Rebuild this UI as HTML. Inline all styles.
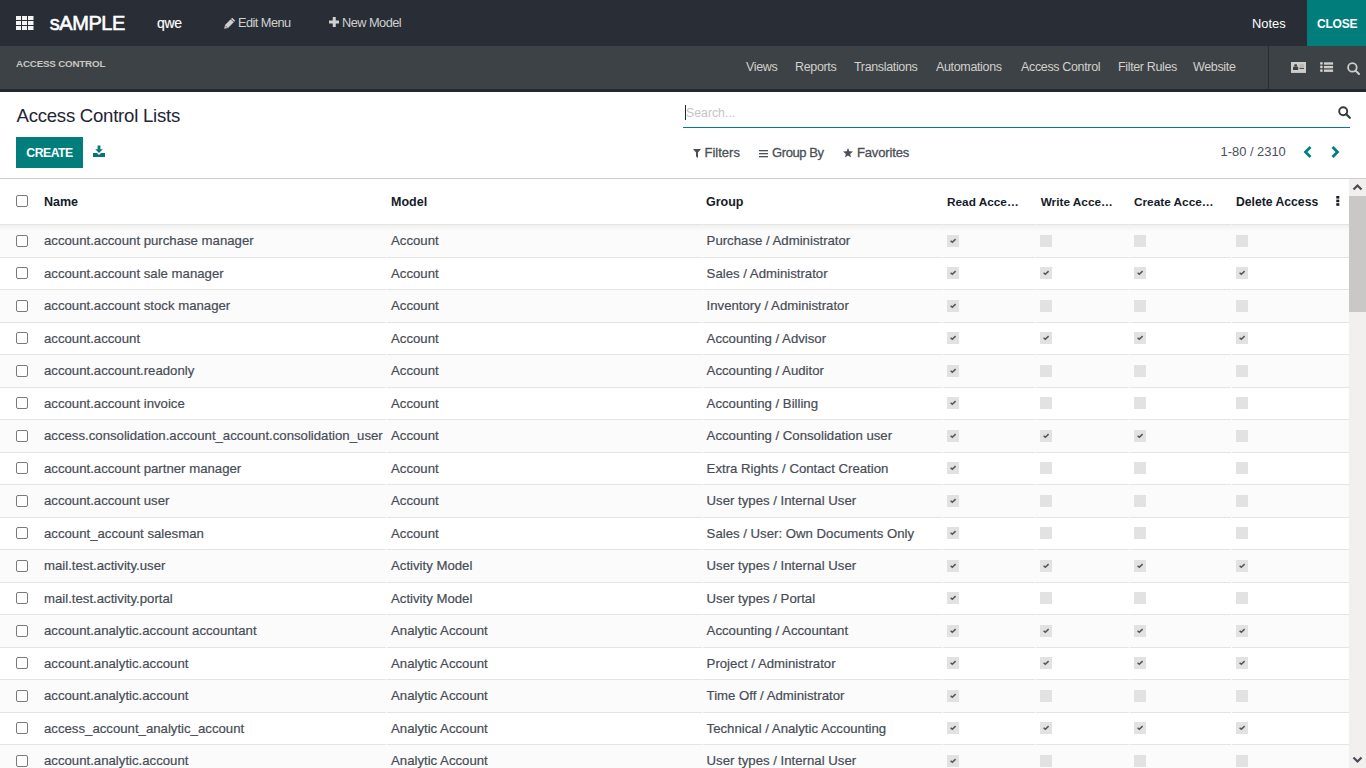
<!DOCTYPE html>
<html><head><meta charset="utf-8">
<style>
*{box-sizing:border-box;margin:0;padding:0}
html,body{width:1366px;height:768px;overflow:hidden;background:#fff;font-family:"Liberation Sans",sans-serif;position:relative}
.abs{position:absolute;white-space:nowrap}
#top{position:absolute;left:0;top:0;width:1366px;height:46px;background:#292d35}
#sub{position:absolute;left:0;top:46px;width:1366px;height:43px;background:#3c4245;border-bottom:0}
#subb{position:absolute;left:0;top:89px;width:1366px;height:3px;background:#24282e}
.t{position:absolute;white-space:nowrap;line-height:1}
.navi{color:#d2d0cc;font-size:12.5px;letter-spacing:-0.35px}
.tl{color:#fff}
#close{position:absolute;left:1307px;top:0;width:59px;height:46px;background:#017e7c}
#cp{position:absolute;left:0;top:92px;width:1366px;height:86px;background:#fff}
#cpb{position:absolute;left:0;top:178px;width:1366px;height:1px;background:#cfcdca}
#create{position:absolute;left:16px;top:137px;width:67px;height:31px;background:#017e7c}
#search{position:absolute;left:683px;top:127px;width:667px;height:1px;background:#017e84}
.fb{color:#4b4f58;font-size:13px;-webkit-text-stroke:0.3px #4b4f58}
.row{position:absolute;left:0;width:1349px}
.row .ln{position:absolute;left:0;top:0;height:1px;background:#e4e4e4}
.cb{position:absolute;left:16px;width:12px;height:12px;border:1.5px solid #7a7a7a;border-radius:2px;background:#fff}
.ck{position:absolute;width:12px;height:12px;background:#e2e2e2}
.ck svg{position:absolute;left:0;top:0}
.cell{position:absolute;color:#474c56;font-size:13.2px;line-height:1;white-space:nowrap;-webkit-text-stroke:0.2px #474c56}
.th{position:absolute;color:#151b29;font-size:12.5px;font-weight:bold;line-height:1;white-space:nowrap}
#sb{position:absolute;left:1349px;top:179px;width:17px;height:589px;background:#f1f0ef}
#thumb{position:absolute;left:1349px;top:196px;width:17px;height:116px;background:#cac8c6}
</style></head><body>
<div id="top"></div>
<div id="sub"></div>
<div id="subb"></div>

<!-- apps icon -->
<svg class="abs" style="left:16px;top:16px" width="18" height="14" viewBox="0 0 18 14">
<g fill="#f4f4f4">
<rect x="0" y="0" width="5" height="4"/><rect x="6" y="0" width="5" height="4"/><rect x="12" y="0" width="5.5" height="4"/>
<rect x="0" y="5" width="5" height="4"/><rect x="6" y="5" width="5" height="4"/><rect x="12" y="5" width="5.5" height="4"/>
<rect x="0" y="10" width="5" height="4"/><rect x="6" y="10" width="5" height="4"/><rect x="12" y="10" width="5.5" height="4"/>
</g></svg>
<div class="t tl" style="left:49.8px;top:13.3px;font-size:20px;letter-spacing:-0.45px;-webkit-text-stroke:0.6px #fff">sAMPLE</div>
<div class="t tl" style="left:157px;top:16px;font-size:14px;letter-spacing:-0.35px;-webkit-text-stroke:0.15px #fff">qwe</div>
<!-- pencil -->
<svg class="abs" style="left:224px;top:16.5px" width="12" height="12" viewBox="0 0 12 12"><path d="M0.2 11.8 L1 8 L8.2 0.8 L11.2 3.8 L4 11 Z" fill="#cfcfcf"/><path d="M6.9 2.1 L9.9 5.1" stroke="#292d35" stroke-width="0.8"/><path d="M1.2 8.6 L3.4 10.8" stroke="#292d35" stroke-width="0.6"/></svg>
<div class="t" style="left:238px;top:17px;font-size:12.8px;letter-spacing:-0.55px;color:#d0d0d0">Edit Menu</div>
<svg class="abs" style="left:328.5px;top:17px" width="10.5" height="10" viewBox="0 0 10.5 10"><path d="M3.75 0h3v3.5H10.5v3H6.75V10h-3V6.5H0v-3h3.75z" fill="#d0d0d0"/></svg>
<div class="t" style="left:342px;top:17px;font-size:12.8px;letter-spacing:-0.55px;color:#d0d0d0">New Model</div>
<div class="t tl" style="left:1252px;top:18px;font-size:12.9px">Notes</div>
<div id="close"></div>
<div class="t tl" style="left:1317px;top:18px;font-size:12px;letter-spacing:-0.2px;font-weight:bold">CLOSE</div>

<!-- sub nav -->
<div class="t" style="left:16px;top:58.7px;font-size:9.8px;font-weight:bold;letter-spacing:-0.2px;color:#c9c7c3">ACCESS CONTROL</div>
<div class="t navi" style="left:746px;top:61px">Views</div>
<div class="t navi" style="left:795px;top:61px">Reports</div>
<div class="t navi" style="left:854px;top:61px">Translations</div>
<div class="t navi" style="left:936px;top:61px">Automations</div>
<div class="t navi" style="left:1021px;top:61px">Access Control</div>
<div class="t navi" style="left:1118px;top:61px">Filter Rules</div>
<div class="t navi" style="left:1193px;top:61px">Website</div>
<div class="abs" style="left:1268px;top:46px;width:1px;height:43px;background:#2a2e33"></div>
<!-- id card -->
<svg class="abs" style="left:1291px;top:62px" width="15" height="11" viewBox="0 0 15 11"><rect x="0" y="0" width="15" height="11" fill="#cfcdc9"/><rect x="3.2" y="2.2" width="2.9" height="2.2" rx="0.8" fill="#3c4245"/><path d="M2 7.9 V5.6 Q2 4.6 3 4.6 H6.3 Q7.2 4.6 7.2 5.6 V7.9Z" fill="#3c4245"/><rect x="8.5" y="2.2" width="4.5" height="4.5" fill="#b9b7b3"/><rect x="8.5" y="6.1" width="4.5" height="0.9" fill="#3c4245"/><rect x="0" y="9.9" width="15" height="1.1" fill="#c4c2be"/></svg>
<!-- list -->
<svg class="abs" style="left:1320px;top:62px" width="14" height="11" viewBox="0 0 14 11"><g fill="#cfcdc9"><circle cx="1.4" cy="1.4" r="1.4"/><circle cx="1.4" cy="5" r="1.4"/><circle cx="1.4" cy="8.7" r="1.4"/><rect x="3.9" y="0.3" width="9.2" height="2.4"/><rect x="3.9" y="3.9" width="9.2" height="2.4"/><rect x="3.9" y="7.5" width="9.2" height="2.4"/></g></svg>
<!-- search -->
<svg class="abs" style="left:1346.5px;top:61.5px" width="13" height="13" viewBox="0 0 13 13"><circle cx="5.4" cy="5.4" r="4.3" fill="none" stroke="#cfcdc9" stroke-width="1.8"/><path d="M8.6 8.6 L12 12" stroke="#cfcdc9" stroke-width="2" stroke-linecap="round"/></svg>

<!-- control panel -->
<div class="t" style="left:16.5px;top:106.5px;font-size:18.6px;letter-spacing:-0.25px;color:#1e2534">Access Control Lists</div>
<div id="create"></div>
<div class="t" style="left:26.3px;top:147.2px;font-size:12.2px;letter-spacing:-0.45px;font-weight:bold;color:#fff">CREATE</div>
<!-- download icon -->
<svg class="abs" style="left:93px;top:145px" width="12" height="12" viewBox="0 0 12 12"><g fill="#07747a"><rect x="4.6" y="0.5" width="2.8" height="4.2"/><path d="M2.2 4.2 H9.8 L6 8 Z"/><path d="M0 8 H4 L6 10 L8 8 H12 V12 H0 Z"/></g></svg>

<div class="abs" style="left:685px;top:105px;width:1px;height:15px;background:#1e2534"></div>
<div class="t" style="left:686px;top:106.5px;font-size:12.3px;color:#c4c4c4">Search...</div>
<div id="search"></div>
<svg class="abs" style="left:1338px;top:106px" width="13" height="13" viewBox="0 0 13 13"><circle cx="5.2" cy="5.2" r="4" fill="none" stroke="#34383f" stroke-width="1.9"/><path d="M8 8 L11.8 11.8" stroke="#34383f" stroke-width="2.2" stroke-linecap="round"/></svg>

<svg class="abs" style="left:693px;top:149px" width="8" height="9" viewBox="0 0 8 9"><path d="M0 0 H8 L5 3.6 V9 L3 7.6 V3.6 Z" fill="#4b4f58"/></svg>
<div class="t fb" style="left:704.5px;top:146px">Filters</div>
<svg class="abs" style="left:759px;top:149px" width="9" height="9" viewBox="0 0 9 9"><g fill="#4b4f58"><rect x="0" y="1" width="9" height="1.3"/><rect x="0" y="4" width="9" height="1.3"/><rect x="0" y="7" width="9" height="1.3"/></g></svg>
<div class="t fb" style="left:772px;top:146px;letter-spacing:-0.4px">Group By</div>
<svg class="abs" style="left:843px;top:148px" width="10" height="10" viewBox="0 0 10 10"><path d="M5 0 L6.3 3.3 L10 3.6 L7.1 5.9 L8.1 9.5 L5 7.5 L1.9 9.5 L2.9 5.9 L0 3.6 L3.7 3.3 Z" fill="#4b4f58"/></svg>
<div class="t fb" style="left:857px;top:146px;letter-spacing:-0.15px">Favorites</div>

<div class="t" style="left:1220.5px;top:146px;font-size:12.9px;color:#4b4f58">1-80 / 2310</div>
<svg class="abs" style="left:1303px;top:146px" width="9" height="12" viewBox="0 0 9 12"><path d="M7.5 1 L2.5 6 L7.5 11" fill="none" stroke="#017e84" stroke-width="2.8"/></svg>
<svg class="abs" style="left:1331px;top:146px" width="9" height="12" viewBox="0 0 9 12"><path d="M1.5 1 L6.5 6 L1.5 11" fill="none" stroke="#017e84" stroke-width="2.8"/></svg>
<div id="cpb"></div>

<!-- table header -->
<div class="cb" style="top:195px"></div>
<div class="th" style="left:44px;top:196px">Name</div>
<div class="th" style="left:391px;top:196px">Model</div>
<div class="th" style="left:706px;top:196px">Group</div>
<div class="th" style="left:947px;top:196.8px;font-size:11.8px">Read Acce…</div>
<div class="th" style="left:1040.7px;top:196.8px;font-size:11.8px">Write Acce…</div>
<div class="th" style="left:1134px;top:196.8px;font-size:11.8px">Create Acce…</div>
<div class="th" style="left:1236px;top:196.3px;font-size:12.2px">Delete Access</div>
<svg class="abs" style="left:1336px;top:196px" width="4" height="10" viewBox="0 0 4 10"><g fill="#151b29"><rect x="0.3" y="0" width="3" height="2.6"/><rect x="0.3" y="3.6" width="3" height="2.6"/><rect x="0.3" y="7.2" width="3" height="2.6"/></g></svg>

<div id="rows">
<div class="row" style="top:224px;height:33px;background:linear-gradient(#f0efee,#fbfbfb 7px)"><div class="ln" style="left:0px;width:386px"></div><div class="ln" style="left:387px;width:315px"></div><div class="ln" style="left:703px;width:239px"></div><div class="ln" style="left:943px;width:92px"></div><div class="ln" style="left:1036px;width:93px"></div><div class="ln" style="left:1130px;width:101px"></div><div class="ln" style="left:1232px;width:117px"></div></div><div class="cb" style="top:235px"></div><div class="cell" style="left:44px;top:234px">account.account purchase manager</div><div class="cell" style="left:391px;top:234px">Account</div><div class="cell" style="left:706.6px;top:234px">Purchase / Administrator</div><div class="ck" style="left:947px;top:235px"><svg width="12" height="12" viewBox="0 0 12 12"><path d="M3.6 5.7 L5.3 7.3 L8.6 4.1" fill="none" stroke="#555" stroke-width="1.5"/></svg></div><div class="ck" style="left:1040px;top:235px"></div><div class="ck" style="left:1134px;top:235px"></div><div class="ck" style="left:1236px;top:235px"></div>
<div class="row" style="top:257px;height:32px;background:#fff"><div class="ln" style="left:0px;width:386px"></div><div class="ln" style="left:387px;width:315px"></div><div class="ln" style="left:703px;width:239px"></div><div class="ln" style="left:943px;width:92px"></div><div class="ln" style="left:1036px;width:93px"></div><div class="ln" style="left:1130px;width:101px"></div><div class="ln" style="left:1232px;width:117px"></div></div><div class="cb" style="top:267px"></div><div class="cell" style="left:44px;top:267px">account.account sale manager</div><div class="cell" style="left:391px;top:267px">Account</div><div class="cell" style="left:706.6px;top:267px">Sales / Administrator</div><div class="ck" style="left:947px;top:267px"><svg width="12" height="12" viewBox="0 0 12 12"><path d="M3.6 5.7 L5.3 7.3 L8.6 4.1" fill="none" stroke="#555" stroke-width="1.5"/></svg></div><div class="ck" style="left:1040px;top:267px"><svg width="12" height="12" viewBox="0 0 12 12"><path d="M3.6 5.7 L5.3 7.3 L8.6 4.1" fill="none" stroke="#555" stroke-width="1.5"/></svg></div><div class="ck" style="left:1134px;top:267px"><svg width="12" height="12" viewBox="0 0 12 12"><path d="M3.6 5.7 L5.3 7.3 L8.6 4.1" fill="none" stroke="#555" stroke-width="1.5"/></svg></div><div class="ck" style="left:1236px;top:267px"><svg width="12" height="12" viewBox="0 0 12 12"><path d="M3.6 5.7 L5.3 7.3 L8.6 4.1" fill="none" stroke="#555" stroke-width="1.5"/></svg></div>
<div class="row" style="top:289px;height:33px;background:#fbfbfb"><div class="ln" style="left:0px;width:386px"></div><div class="ln" style="left:387px;width:315px"></div><div class="ln" style="left:703px;width:239px"></div><div class="ln" style="left:943px;width:92px"></div><div class="ln" style="left:1036px;width:93px"></div><div class="ln" style="left:1130px;width:101px"></div><div class="ln" style="left:1232px;width:117px"></div></div><div class="cb" style="top:300px"></div><div class="cell" style="left:44px;top:299px">account.account stock manager</div><div class="cell" style="left:391px;top:299px">Account</div><div class="cell" style="left:706.6px;top:299px">Inventory / Administrator</div><div class="ck" style="left:947px;top:300px"><svg width="12" height="12" viewBox="0 0 12 12"><path d="M3.6 5.7 L5.3 7.3 L8.6 4.1" fill="none" stroke="#555" stroke-width="1.5"/></svg></div><div class="ck" style="left:1040px;top:300px"></div><div class="ck" style="left:1134px;top:300px"></div><div class="ck" style="left:1236px;top:300px"></div>
<div class="row" style="top:322px;height:32px;background:#fff"><div class="ln" style="left:0px;width:386px"></div><div class="ln" style="left:387px;width:315px"></div><div class="ln" style="left:703px;width:239px"></div><div class="ln" style="left:943px;width:92px"></div><div class="ln" style="left:1036px;width:93px"></div><div class="ln" style="left:1130px;width:101px"></div><div class="ln" style="left:1232px;width:117px"></div></div><div class="cb" style="top:332px"></div><div class="cell" style="left:44px;top:332px">account.account</div><div class="cell" style="left:391px;top:332px">Account</div><div class="cell" style="left:706.6px;top:332px">Accounting / Advisor</div><div class="ck" style="left:947px;top:332px"><svg width="12" height="12" viewBox="0 0 12 12"><path d="M3.6 5.7 L5.3 7.3 L8.6 4.1" fill="none" stroke="#555" stroke-width="1.5"/></svg></div><div class="ck" style="left:1040px;top:332px"><svg width="12" height="12" viewBox="0 0 12 12"><path d="M3.6 5.7 L5.3 7.3 L8.6 4.1" fill="none" stroke="#555" stroke-width="1.5"/></svg></div><div class="ck" style="left:1134px;top:332px"><svg width="12" height="12" viewBox="0 0 12 12"><path d="M3.6 5.7 L5.3 7.3 L8.6 4.1" fill="none" stroke="#555" stroke-width="1.5"/></svg></div><div class="ck" style="left:1236px;top:332px"><svg width="12" height="12" viewBox="0 0 12 12"><path d="M3.6 5.7 L5.3 7.3 L8.6 4.1" fill="none" stroke="#555" stroke-width="1.5"/></svg></div>
<div class="row" style="top:354px;height:33px;background:#fbfbfb"><div class="ln" style="left:0px;width:386px"></div><div class="ln" style="left:387px;width:315px"></div><div class="ln" style="left:703px;width:239px"></div><div class="ln" style="left:943px;width:92px"></div><div class="ln" style="left:1036px;width:93px"></div><div class="ln" style="left:1130px;width:101px"></div><div class="ln" style="left:1232px;width:117px"></div></div><div class="cb" style="top:365px"></div><div class="cell" style="left:44px;top:364px">account.account.readonly</div><div class="cell" style="left:391px;top:364px">Account</div><div class="cell" style="left:706.6px;top:364px">Accounting / Auditor</div><div class="ck" style="left:947px;top:365px"><svg width="12" height="12" viewBox="0 0 12 12"><path d="M3.6 5.7 L5.3 7.3 L8.6 4.1" fill="none" stroke="#555" stroke-width="1.5"/></svg></div><div class="ck" style="left:1040px;top:365px"></div><div class="ck" style="left:1134px;top:365px"></div><div class="ck" style="left:1236px;top:365px"></div>
<div class="row" style="top:387px;height:32px;background:#fff"><div class="ln" style="left:0px;width:386px"></div><div class="ln" style="left:387px;width:315px"></div><div class="ln" style="left:703px;width:239px"></div><div class="ln" style="left:943px;width:92px"></div><div class="ln" style="left:1036px;width:93px"></div><div class="ln" style="left:1130px;width:101px"></div><div class="ln" style="left:1232px;width:117px"></div></div><div class="cb" style="top:397px"></div><div class="cell" style="left:44px;top:397px">account.account invoice</div><div class="cell" style="left:391px;top:397px">Account</div><div class="cell" style="left:706.6px;top:397px">Accounting / Billing</div><div class="ck" style="left:947px;top:397px"><svg width="12" height="12" viewBox="0 0 12 12"><path d="M3.6 5.7 L5.3 7.3 L8.6 4.1" fill="none" stroke="#555" stroke-width="1.5"/></svg></div><div class="ck" style="left:1040px;top:397px"></div><div class="ck" style="left:1134px;top:397px"></div><div class="ck" style="left:1236px;top:397px"></div>
<div class="row" style="top:419px;height:33px;background:#fbfbfb"><div class="ln" style="left:0px;width:386px"></div><div class="ln" style="left:387px;width:315px"></div><div class="ln" style="left:703px;width:239px"></div><div class="ln" style="left:943px;width:92px"></div><div class="ln" style="left:1036px;width:93px"></div><div class="ln" style="left:1130px;width:101px"></div><div class="ln" style="left:1232px;width:117px"></div></div><div class="cb" style="top:430px"></div><div class="cell" style="left:44px;top:429px">access.consolidation.account_account.consolidation_user</div><div class="cell" style="left:391px;top:429px">Account</div><div class="cell" style="left:706.6px;top:429px">Accounting / Consolidation user</div><div class="ck" style="left:947px;top:430px"><svg width="12" height="12" viewBox="0 0 12 12"><path d="M3.6 5.7 L5.3 7.3 L8.6 4.1" fill="none" stroke="#555" stroke-width="1.5"/></svg></div><div class="ck" style="left:1040px;top:430px"><svg width="12" height="12" viewBox="0 0 12 12"><path d="M3.6 5.7 L5.3 7.3 L8.6 4.1" fill="none" stroke="#555" stroke-width="1.5"/></svg></div><div class="ck" style="left:1134px;top:430px"><svg width="12" height="12" viewBox="0 0 12 12"><path d="M3.6 5.7 L5.3 7.3 L8.6 4.1" fill="none" stroke="#555" stroke-width="1.5"/></svg></div><div class="ck" style="left:1236px;top:430px"></div>
<div class="row" style="top:452px;height:32px;background:#fff"><div class="ln" style="left:0px;width:386px"></div><div class="ln" style="left:387px;width:315px"></div><div class="ln" style="left:703px;width:239px"></div><div class="ln" style="left:943px;width:92px"></div><div class="ln" style="left:1036px;width:93px"></div><div class="ln" style="left:1130px;width:101px"></div><div class="ln" style="left:1232px;width:117px"></div></div><div class="cb" style="top:462px"></div><div class="cell" style="left:44px;top:462px">account.account partner manager</div><div class="cell" style="left:391px;top:462px">Account</div><div class="cell" style="left:706.6px;top:462px">Extra Rights / Contact Creation</div><div class="ck" style="left:947px;top:462px"><svg width="12" height="12" viewBox="0 0 12 12"><path d="M3.6 5.7 L5.3 7.3 L8.6 4.1" fill="none" stroke="#555" stroke-width="1.5"/></svg></div><div class="ck" style="left:1040px;top:462px"></div><div class="ck" style="left:1134px;top:462px"></div><div class="ck" style="left:1236px;top:462px"></div>
<div class="row" style="top:484px;height:33px;background:#fbfbfb"><div class="ln" style="left:0px;width:386px"></div><div class="ln" style="left:387px;width:315px"></div><div class="ln" style="left:703px;width:239px"></div><div class="ln" style="left:943px;width:92px"></div><div class="ln" style="left:1036px;width:93px"></div><div class="ln" style="left:1130px;width:101px"></div><div class="ln" style="left:1232px;width:117px"></div></div><div class="cb" style="top:495px"></div><div class="cell" style="left:44px;top:494px">account.account user</div><div class="cell" style="left:391px;top:494px">Account</div><div class="cell" style="left:706.6px;top:494px">User types / Internal User</div><div class="ck" style="left:947px;top:495px"><svg width="12" height="12" viewBox="0 0 12 12"><path d="M3.6 5.7 L5.3 7.3 L8.6 4.1" fill="none" stroke="#555" stroke-width="1.5"/></svg></div><div class="ck" style="left:1040px;top:495px"></div><div class="ck" style="left:1134px;top:495px"></div><div class="ck" style="left:1236px;top:495px"></div>
<div class="row" style="top:517px;height:32px;background:#fff"><div class="ln" style="left:0px;width:386px"></div><div class="ln" style="left:387px;width:315px"></div><div class="ln" style="left:703px;width:239px"></div><div class="ln" style="left:943px;width:92px"></div><div class="ln" style="left:1036px;width:93px"></div><div class="ln" style="left:1130px;width:101px"></div><div class="ln" style="left:1232px;width:117px"></div></div><div class="cb" style="top:527px"></div><div class="cell" style="left:44px;top:527px">account_account salesman</div><div class="cell" style="left:391px;top:527px">Account</div><div class="cell" style="left:706.6px;top:527px">Sales / User: Own Documents Only</div><div class="ck" style="left:947px;top:527px"><svg width="12" height="12" viewBox="0 0 12 12"><path d="M3.6 5.7 L5.3 7.3 L8.6 4.1" fill="none" stroke="#555" stroke-width="1.5"/></svg></div><div class="ck" style="left:1040px;top:527px"></div><div class="ck" style="left:1134px;top:527px"></div><div class="ck" style="left:1236px;top:527px"></div>
<div class="row" style="top:549px;height:33px;background:#fbfbfb"><div class="ln" style="left:0px;width:386px"></div><div class="ln" style="left:387px;width:315px"></div><div class="ln" style="left:703px;width:239px"></div><div class="ln" style="left:943px;width:92px"></div><div class="ln" style="left:1036px;width:93px"></div><div class="ln" style="left:1130px;width:101px"></div><div class="ln" style="left:1232px;width:117px"></div></div><div class="cb" style="top:560px"></div><div class="cell" style="left:44px;top:559px">mail.test.activity.user</div><div class="cell" style="left:391px;top:559px">Activity Model</div><div class="cell" style="left:706.6px;top:559px">User types / Internal User</div><div class="ck" style="left:947px;top:560px"><svg width="12" height="12" viewBox="0 0 12 12"><path d="M3.6 5.7 L5.3 7.3 L8.6 4.1" fill="none" stroke="#555" stroke-width="1.5"/></svg></div><div class="ck" style="left:1040px;top:560px"><svg width="12" height="12" viewBox="0 0 12 12"><path d="M3.6 5.7 L5.3 7.3 L8.6 4.1" fill="none" stroke="#555" stroke-width="1.5"/></svg></div><div class="ck" style="left:1134px;top:560px"><svg width="12" height="12" viewBox="0 0 12 12"><path d="M3.6 5.7 L5.3 7.3 L8.6 4.1" fill="none" stroke="#555" stroke-width="1.5"/></svg></div><div class="ck" style="left:1236px;top:560px"><svg width="12" height="12" viewBox="0 0 12 12"><path d="M3.6 5.7 L5.3 7.3 L8.6 4.1" fill="none" stroke="#555" stroke-width="1.5"/></svg></div>
<div class="row" style="top:582px;height:32px;background:#fff"><div class="ln" style="left:0px;width:386px"></div><div class="ln" style="left:387px;width:315px"></div><div class="ln" style="left:703px;width:239px"></div><div class="ln" style="left:943px;width:92px"></div><div class="ln" style="left:1036px;width:93px"></div><div class="ln" style="left:1130px;width:101px"></div><div class="ln" style="left:1232px;width:117px"></div></div><div class="cb" style="top:592px"></div><div class="cell" style="left:44px;top:592px">mail.test.activity.portal</div><div class="cell" style="left:391px;top:592px">Activity Model</div><div class="cell" style="left:706.6px;top:592px">User types / Portal</div><div class="ck" style="left:947px;top:592px"><svg width="12" height="12" viewBox="0 0 12 12"><path d="M3.6 5.7 L5.3 7.3 L8.6 4.1" fill="none" stroke="#555" stroke-width="1.5"/></svg></div><div class="ck" style="left:1040px;top:592px"></div><div class="ck" style="left:1134px;top:592px"></div><div class="ck" style="left:1236px;top:592px"></div>
<div class="row" style="top:614px;height:33px;background:#fbfbfb"><div class="ln" style="left:0px;width:386px"></div><div class="ln" style="left:387px;width:315px"></div><div class="ln" style="left:703px;width:239px"></div><div class="ln" style="left:943px;width:92px"></div><div class="ln" style="left:1036px;width:93px"></div><div class="ln" style="left:1130px;width:101px"></div><div class="ln" style="left:1232px;width:117px"></div></div><div class="cb" style="top:625px"></div><div class="cell" style="left:44px;top:624px">account.analytic.account accountant</div><div class="cell" style="left:391px;top:624px">Analytic Account</div><div class="cell" style="left:706.6px;top:624px">Accounting / Accountant</div><div class="ck" style="left:947px;top:625px"><svg width="12" height="12" viewBox="0 0 12 12"><path d="M3.6 5.7 L5.3 7.3 L8.6 4.1" fill="none" stroke="#555" stroke-width="1.5"/></svg></div><div class="ck" style="left:1040px;top:625px"><svg width="12" height="12" viewBox="0 0 12 12"><path d="M3.6 5.7 L5.3 7.3 L8.6 4.1" fill="none" stroke="#555" stroke-width="1.5"/></svg></div><div class="ck" style="left:1134px;top:625px"><svg width="12" height="12" viewBox="0 0 12 12"><path d="M3.6 5.7 L5.3 7.3 L8.6 4.1" fill="none" stroke="#555" stroke-width="1.5"/></svg></div><div class="ck" style="left:1236px;top:625px"><svg width="12" height="12" viewBox="0 0 12 12"><path d="M3.6 5.7 L5.3 7.3 L8.6 4.1" fill="none" stroke="#555" stroke-width="1.5"/></svg></div>
<div class="row" style="top:647px;height:32px;background:#fff"><div class="ln" style="left:0px;width:386px"></div><div class="ln" style="left:387px;width:315px"></div><div class="ln" style="left:703px;width:239px"></div><div class="ln" style="left:943px;width:92px"></div><div class="ln" style="left:1036px;width:93px"></div><div class="ln" style="left:1130px;width:101px"></div><div class="ln" style="left:1232px;width:117px"></div></div><div class="cb" style="top:657px"></div><div class="cell" style="left:44px;top:657px">account.analytic.account</div><div class="cell" style="left:391px;top:657px">Analytic Account</div><div class="cell" style="left:706.6px;top:657px">Project / Administrator</div><div class="ck" style="left:947px;top:657px"><svg width="12" height="12" viewBox="0 0 12 12"><path d="M3.6 5.7 L5.3 7.3 L8.6 4.1" fill="none" stroke="#555" stroke-width="1.5"/></svg></div><div class="ck" style="left:1040px;top:657px"><svg width="12" height="12" viewBox="0 0 12 12"><path d="M3.6 5.7 L5.3 7.3 L8.6 4.1" fill="none" stroke="#555" stroke-width="1.5"/></svg></div><div class="ck" style="left:1134px;top:657px"><svg width="12" height="12" viewBox="0 0 12 12"><path d="M3.6 5.7 L5.3 7.3 L8.6 4.1" fill="none" stroke="#555" stroke-width="1.5"/></svg></div><div class="ck" style="left:1236px;top:657px"><svg width="12" height="12" viewBox="0 0 12 12"><path d="M3.6 5.7 L5.3 7.3 L8.6 4.1" fill="none" stroke="#555" stroke-width="1.5"/></svg></div>
<div class="row" style="top:679px;height:33px;background:#fbfbfb"><div class="ln" style="left:0px;width:386px"></div><div class="ln" style="left:387px;width:315px"></div><div class="ln" style="left:703px;width:239px"></div><div class="ln" style="left:943px;width:92px"></div><div class="ln" style="left:1036px;width:93px"></div><div class="ln" style="left:1130px;width:101px"></div><div class="ln" style="left:1232px;width:117px"></div></div><div class="cb" style="top:690px"></div><div class="cell" style="left:44px;top:689px">account.analytic.account</div><div class="cell" style="left:391px;top:689px">Analytic Account</div><div class="cell" style="left:706.6px;top:689px">Time Off / Administrator</div><div class="ck" style="left:947px;top:690px"><svg width="12" height="12" viewBox="0 0 12 12"><path d="M3.6 5.7 L5.3 7.3 L8.6 4.1" fill="none" stroke="#555" stroke-width="1.5"/></svg></div><div class="ck" style="left:1040px;top:690px"></div><div class="ck" style="left:1134px;top:690px"></div><div class="ck" style="left:1236px;top:690px"></div>
<div class="row" style="top:712px;height:32px;background:#fff"><div class="ln" style="left:0px;width:386px"></div><div class="ln" style="left:387px;width:315px"></div><div class="ln" style="left:703px;width:239px"></div><div class="ln" style="left:943px;width:92px"></div><div class="ln" style="left:1036px;width:93px"></div><div class="ln" style="left:1130px;width:101px"></div><div class="ln" style="left:1232px;width:117px"></div></div><div class="cb" style="top:722px"></div><div class="cell" style="left:44px;top:722px">access_account_analytic_account</div><div class="cell" style="left:391px;top:722px">Analytic Account</div><div class="cell" style="left:706.6px;top:722px">Technical / Analytic Accounting</div><div class="ck" style="left:947px;top:722px"><svg width="12" height="12" viewBox="0 0 12 12"><path d="M3.6 5.7 L5.3 7.3 L8.6 4.1" fill="none" stroke="#555" stroke-width="1.5"/></svg></div><div class="ck" style="left:1040px;top:722px"><svg width="12" height="12" viewBox="0 0 12 12"><path d="M3.6 5.7 L5.3 7.3 L8.6 4.1" fill="none" stroke="#555" stroke-width="1.5"/></svg></div><div class="ck" style="left:1134px;top:722px"><svg width="12" height="12" viewBox="0 0 12 12"><path d="M3.6 5.7 L5.3 7.3 L8.6 4.1" fill="none" stroke="#555" stroke-width="1.5"/></svg></div><div class="ck" style="left:1236px;top:722px"><svg width="12" height="12" viewBox="0 0 12 12"><path d="M3.6 5.7 L5.3 7.3 L8.6 4.1" fill="none" stroke="#555" stroke-width="1.5"/></svg></div>
<div class="row" style="top:744px;height:33px;background:#fbfbfb"><div class="ln" style="left:0px;width:386px"></div><div class="ln" style="left:387px;width:315px"></div><div class="ln" style="left:703px;width:239px"></div><div class="ln" style="left:943px;width:92px"></div><div class="ln" style="left:1036px;width:93px"></div><div class="ln" style="left:1130px;width:101px"></div><div class="ln" style="left:1232px;width:117px"></div></div><div class="cb" style="top:755px"></div><div class="cell" style="left:44px;top:754px">account.analytic.account</div><div class="cell" style="left:391px;top:754px">Analytic Account</div><div class="cell" style="left:706.6px;top:754px">User types / Internal User</div><div class="ck" style="left:947px;top:755px"><svg width="12" height="12" viewBox="0 0 12 12"><path d="M3.6 5.7 L5.3 7.3 L8.6 4.1" fill="none" stroke="#555" stroke-width="1.5"/></svg></div><div class="ck" style="left:1040px;top:755px"></div><div class="ck" style="left:1134px;top:755px"></div><div class="ck" style="left:1236px;top:755px"></div>
</div>

<div id="sb"></div>
<div id="thumb"></div>
<svg class="abs" style="left:1352px;top:183px" width="11" height="8" viewBox="0 0 11 8"><path d="M1.5 6.5 L5.5 2.5 L9.5 6.5" fill="none" stroke="#4f4753" stroke-width="2.2"/></svg>
<svg class="abs" style="left:1352px;top:756px" width="11" height="8" viewBox="0 0 11 8"><path d="M1.5 1.5 L5.5 5.5 L9.5 1.5" fill="none" stroke="#4f4753" stroke-width="2.2"/></svg>
</body></html>
